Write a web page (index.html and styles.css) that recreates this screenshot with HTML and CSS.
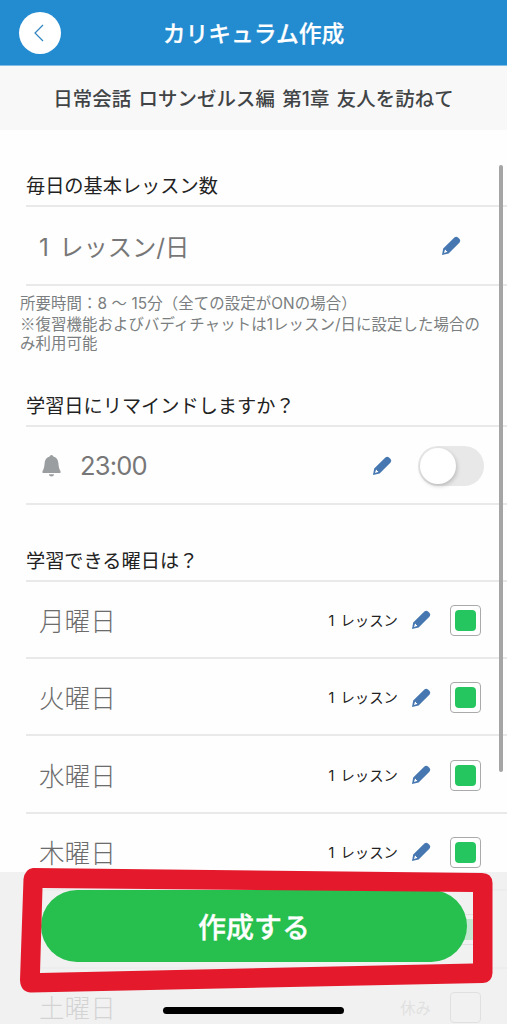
FILE: index.html
```html
<!DOCTYPE html>
<html lang="ja">
<head>
<meta charset="utf-8">
<title>カリキュラム作成</title>
<link rel="stylesheet" href="styles.css">
</head>
<body>
<svg class="defs" aria-hidden="true">
  <symbol id="pencil" viewBox="0 0 20 20">
    <path fill="#4777b0" fill-rule="evenodd" d="M1 19 2.200 12.400 13.400 1.400Q15.300 0 17 1.400L18.600 3Q20 4.700 18.600 6.600L7.600 17.600ZM3.900 14 3 17 6 16.100 6.200 14.900 5 15V13.800Z"/>
  </symbol>
</svg>
<div class="screen">
  <header class="navbar">
    <button class="back" aria-label="戻る"><svg class="chevron" viewBox="0 0 10 18"><path d="M9 1 1 9l8 8" fill="none" stroke="#3184bd" stroke-width="1.2"/></svg></button>
    <h1 class="title">カリキュラム作成</h1>
  </header>
  <div class="course">日常会話 ロサンゼルス編 第1章 友人を訪ねて</div>
  <main class="content">
    <section class="group">
      <h2 class="heading first">毎日の基本レッスン数</h2>
      <div class="row lesson"><span class="count"><span class="one">1</span>レッスン/日</span><svg class="pencil"><use href="#pencil"/></svg></div>
    </section>
    <p class="note">所要時間：8 〜 15分（全ての設定がONの場合）<br><span class="mark">※</span>復習機能およびバディチャットは1レッスン/日に設定した場合の<br>み利用可能</p>
    <section class="group">
      <h2 class="heading second">学習日にリマインドしますか？</h2>
      <div class="row remind">
        <svg class="bell" viewBox="0 0 18 22"><path fill="#9a9ea1" d="M9 0Q10.600 0 10.900 1.600C14.300 2.500 15.600 5.200 15.900 8.300 16.200 12.500 16.800 14.400 18 16V18H0V16C1.200 14.400 1.800 12.500 2.100 8.300 2.400 5.200 3.700 2.500 7.100 1.600Q7.400 0 9 0ZM6.500 19.300H11.500C11.500 22.300 6.500 22.300 6.500 19.300Z"/></svg>
        <span class="time">23:00</span><svg class="pencil"><use href="#pencil"/></svg><span class="switch"><span class="knob"></span></span>
      </div>
    </section>
    <section class="group">
      <h2 class="heading third">学習できる曜日は？</h2>
      <div class="row"><span class="day">月曜日</span><span class="amount"><span class="one">1</span>レッスン</span><svg class="pencil"><use href="#pencil"/></svg><span class="check on"></span></div>
      <div class="row"><span class="day">火曜日</span><span class="amount"><span class="one">1</span>レッスン</span><svg class="pencil"><use href="#pencil"/></svg><span class="check on"></span></div>
      <div class="row"><span class="day">水曜日</span><span class="amount"><span class="one">1</span>レッスン</span><svg class="pencil"><use href="#pencil"/></svg><span class="check on"></span></div>
      <div class="row"><span class="day">木曜日</span><span class="amount"><span class="one">1</span>レッスン</span><svg class="pencil"><use href="#pencil"/></svg><span class="check on"></span></div>
      <div class="row"><span class="day"></span><span class="check on"></span></div>
      <div class="row"><span class="day">土曜日</span><span class="off">休み</span><span class="check"></span></div>
    </section>
  </main>
  <i class="scrollbar"></i>
  <footer class="footer">
    <button class="create">作成する</button>
    <i class="home"></i>
  </footer>
  <svg class="marker" viewBox="0 0 507 1024"><path fill="#e4192c" fill-rule="evenodd" d="M33 868 482 873Q492 873 492.500 883L492.500 973Q492 982.500 483 983L31 992.500Q20.500 992 20 980L23.500 879Q25 869 33 868ZM42.500 888 40 973 473 963.500V892Z"/></svg>
</div>
</body>
</html>
```
FILE: styles.css
```css
* { box-sizing: border-box; }
body { margin: 0; font-family: Inter, "Noto Sans CJK JP", sans-serif; }
button { border: 0; padding: 0; font-family: inherit; }
h1, h2, p { margin: 0; }
.defs { position: absolute; width: 0; height: 0; }
.screen { position: relative; width: 507px; height: 1024px; overflow: hidden; background: #fefefe; }
.navbar { display: grid; grid-template-columns: 80px 1fr 80px; align-items: center; height: 66px; background: #238bd0; border-bottom: 1px solid #83bde5; }
.back { display: grid; place-items: center; width: 42px; height: 42px; margin-left: 19px; border-radius: 50%; background: #fff; }
.chevron { width: 10px; height: 18px; margin-right: 2px; }
.title { padding-top: 2px; color: #fff; font-size: 22.800px; line-height: 32px; font-weight: 500; text-align: center; white-space: nowrap; -webkit-text-stroke: .2px #fff; }
.course { height: 64px; background: #f8f8f8; color: #414446; font-size: 19.400px; line-height: 66px; font-weight: 500; text-align: center; white-space: nowrap; word-spacing: 2px; letter-spacing: .1px; }
.group { padding-left: 26px; }
.heading { color: #222; font-size: 19.200px; font-weight: 400; line-height: 28px; border-bottom: 2px solid #e9e9e9; white-space: nowrap; }
.first { padding-top: 42px; height: 77px; }
.second { height: 76px; padding-top: 41px; }
.third { height: 77px; padding-top: 42px; }
.row { display: flex; align-items: center; height: 77.400px; padding: 2px 26px 0 13px; border-bottom: 2px solid #e9e9e9; color: #777; }
.lesson { height: 79px; padding-right: 46px; padding-top: 0; }
.remind { height: 77.600px; padding-right: 23px; }
.count { margin-right: auto; font-size: 24.300px; white-space: nowrap; }
.one { display: inline-block; width: .83em; }
.note { padding: 8px 0 0 20px; height: 65px; color: #7b7e80; font-size: 15.400px; line-height: 19.500px; letter-spacing: .1px; white-space: nowrap; }
.mark { font-family: "Noto Sans CJK JP", sans-serif; }
.pencil { width: 20px; height: 20px; flex: none; }
.bell { width: 19px; height: 22px; margin-left: 3px; }
.time { margin: 0 auto 0 19px; font-size: 25.500px; letter-spacing: -.8px; }
.switch { width: 66px; height: 40px; margin-left: 26px; padding: 2px; border-radius: 20px; background: #e8e8e8; }
.knob { display: block; width: 36px; height: 36px; border-radius: 50%; background: #fff; box-shadow: 1px 2px 4px rgba(0,0,0,.2); }
.day { margin-right: auto; padding-bottom: 2px; font-size: 25.600px; font-weight: 300; color: #6c6c6c; }
.amount { margin-right: 13px; padding-bottom: 2px; color: #222; font-size: 14.400px; white-space: nowrap; }
.check { width: 31px; height: 31px; margin-left: 19px; border: 1.500px solid #aaa; border-radius: 4px; display: grid; place-items: center; background: #fff; }
.on::before { content: ""; width: 21px; height: 21px; border-radius: 4px; background: #25c660; }
.off { color: #aaa; font-size: 15.400px; }
.scrollbar { position: absolute; left: 499px; top: 165px; width: 4px; height: 607px; border-radius: 2px; background: #a5a5a5; }
.footer { position: absolute; left: 0; top: 872px; width: 507px; height: 152px; padding: 18px 40px 0 41px; background: rgba(238,238,238,.8); }
.create { display: block; width: 426px; height: 72px; border-radius: 36px; background: #27bf4e; color: #fff; font-size: 28px; font-weight: 500; -webkit-text-stroke: .3px #fff; }
.home { display: block; width: 181px; height: 7px; margin: 45px 0 0 122px; border-radius: 4px; background: #000; }
.marker { position: absolute; left: 0; top: 0; width: 507px; height: 1024px; }
```
